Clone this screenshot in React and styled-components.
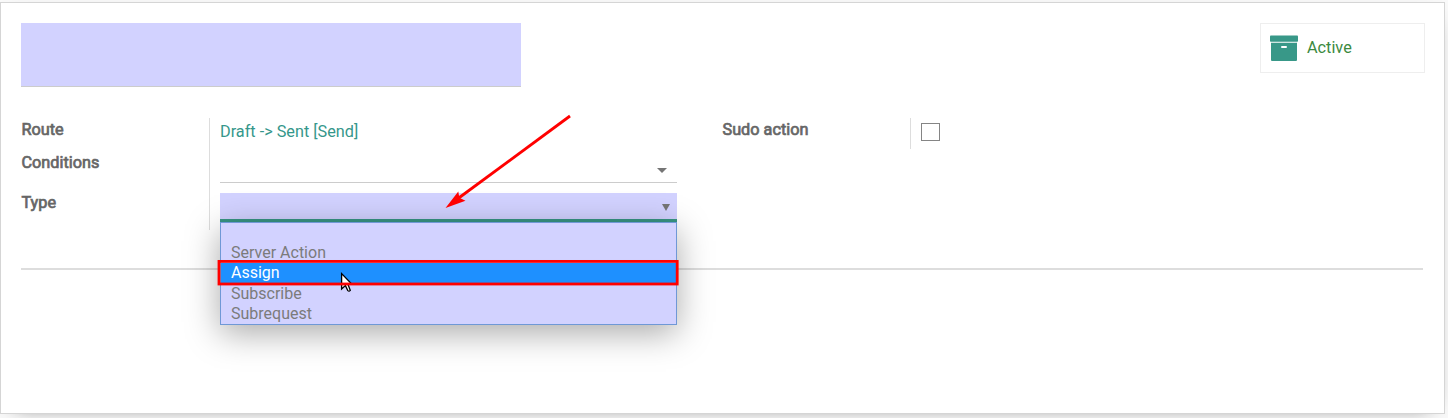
import React from "react";
import styled, { createGlobalStyle } from "styled-components";

const GlobalStyle = createGlobalStyle`
  * { box-sizing: border-box; }
  body {
    margin: 0;
    background: #f9f9f9;
    font: 16px/20px Roboto, "Liberation Sans", sans-serif;
    color: #666;
    overflow: hidden;
  }
`;

const Page = styled.main`
  height: 418px;
  padding: 2px 3px 4px 0;
  overflow: hidden;
`;

const Sheet = styled.section`
  position: relative;
  width: 1445px;
  height: 412px;
  padding: 20px 19px 0 20px;
  background: #fff;
  border: 1px solid #d5d5d5;
  box-shadow: 0 5px 20px -15px rgba(0, 0, 0, 0.8);
`;

const Header = styled.header`
  display: flex;
  justify-content: space-between;
  align-items: flex-start;
`;

const TitleInput = styled.div`
  width: 500px;
  height: 64px;
  background: #d2d2ff;
  border-bottom: 1px solid #ccc;
`;

const StatButton = styled.button`
  display: flex;
  align-items: center;
  gap: 9px;
  width: 165px;
  height: 50px;
  padding: 0 9px;
  background: #fff;
  border: 1px solid #eee;
  font: inherit;
  font-size: 16.25px;
  color: #3c8a3f;
`;

const Groups = styled.div`
  display: flex;
  gap: 45px;
  margin-top: 31px;
`;

const Group = styled.div`
  display: grid;
  grid-template-columns: 188px 468px;
  grid-template-rows: ${(p) => p.$rows};
  align-content: start;
`;

const Label = styled.label`
  padding-top: ${(p) => (p.$raised ? 0 : 2)}px;
  border-right: 1px solid #ddd;
  margin-right: -1px;
  padding-left: 0.5px;
  font-weight: 400;
  font-size: 16.25px;
  -webkit-text-stroke: 0.7px #666;
`;

const Cell = styled.div`
  padding-left: 11px;
`;

const RouteLink = styled.a`
  display: block;
  padding-top: 4px;
  font-size: 16.25px;
  color: #35978b;
`;

const ManyToOne = styled.div`
  display: flex;
  justify-content: flex-end;
  width: 457px;
  height: 32px;
  padding: 17px 10px 0 0;
  border-bottom: 1px solid #ccc;
`;

const Caret = styled.i`
  width: 0;
  height: 0;
  border: solid transparent;
  border-width: ${(p) => p.$height}px ${(p) => p.$half}px 0;
  border-top-color: #757575;
`;

const Select = styled.div`
  position: relative;
  width: 457px;
`;

const SelectBox = styled.div`
  display: flex;
  justify-content: flex-end;
  height: 29px;
  padding: 11px 7px 0 0;
  background: #d2d2ff;
  border-bottom: 3px solid #389584;
`;

const Menu = styled.ul`
  position: absolute;
  top: 29px;
  left: 0;
  width: 457px;
  height: 103px;
  margin: 0;
  padding: 0;
  list-style: none;
  background: #d2d2ff;
  border: 1px solid #6f98d6;
  box-shadow: 0 8px 32px rgba(0, 0, 0, 0.34);
`;

const Option = styled.li`
  height: 20.2px;
  line-height: 20.2px;
  padding-left: 10px;
  color: ${(p) => (p.$active ? "#fff" : "#7b7b7b")};
  background: ${(p) => (p.$active ? "#1e90ff" : "transparent")};
`;

const Checkbox = styled.div`
  width: 19px;
  height: 18px;
  margin-top: 5px;
  border: 1px solid #858585;
`;

const Divider = styled.div`
  width: 1402px;
  height: 2px;
  margin-top: 38px;
  background: #ddd;
`;

const Annotations = styled.svg`
  position: absolute;
  top: -3px;
  left: -1px;
  pointer-events: none;
`;

const options = ["", "Server Action", "Assign", "Subscribe", "Subrequest"];

const ArchiveIcon = () => (
  <svg width="28" height="26" viewBox="0 0 28 26" fill="#389888">
    <rect y="0.4" width="28" height="6.4" rx="0.8" />
    <path fillRule="evenodd" d="M1 7.8H27V25Q27 26 26 26H2Q1 26 1 25ZM12 11Q11 11 11 12T12 13H16Q17 13 17 12T16 11Z" />
  </svg>
);

export default function App() {
  return (
    <Page>
      <GlobalStyle />
      <Sheet>
        <Header>
          <TitleInput />
          <StatButton>
            <ArchiveIcon />
            Active
          </StatButton>
        </Header>
        <Groups>
          <Group $rows="33px 42px 37px">
            <Label>Route</Label>
            <Cell><RouteLink>Draft -&gt; Sent [Send]</RouteLink></Cell>
            <Label>Conditions</Label>
            <Cell><ManyToOne><Caret $half={5} $height={5} /></ManyToOne></Cell>
            <Label $raised>Type</Label>
            <Cell>
              <Select>
                <SelectBox><Caret $half={4} $height={7} /></SelectBox>
                <Menu>
                  {options.map((name) => (
                    <Option key={name} $active={name === "Assign"}>{name}</Option>
                  ))}
                </Menu>
              </Select>
            </Cell>
          </Group>
          <Group $rows="31px">
            <Label>Sudo action</Label>
            <Cell><Checkbox /></Cell>
          </Group>
        </Groups>
        <Divider />
        <Annotations width="1448" height="418" viewBox="0 0 1448 418">
          <path d="M341.6 273.5V289L345.4 285.6L347.8 290.6Q349 291.8 350.3 290.4L348 284.4H352Z" fill="#fff" stroke="#000" strokeWidth="1.3" />
          <rect x="219" y="261.4" width="458.2" height="22.6" fill="none" stroke="#f00" strokeWidth="2.8" />
          <path d="M570 116L456 200" fill="none" stroke="#f00" strokeWidth="2.8" />
          <path d="M445.5 208L458.3 191.5L459.3 197.8L465.5 200.8Z" fill="#f00" />
        </Annotations>
      </Sheet>
    </Page>
  );
}
